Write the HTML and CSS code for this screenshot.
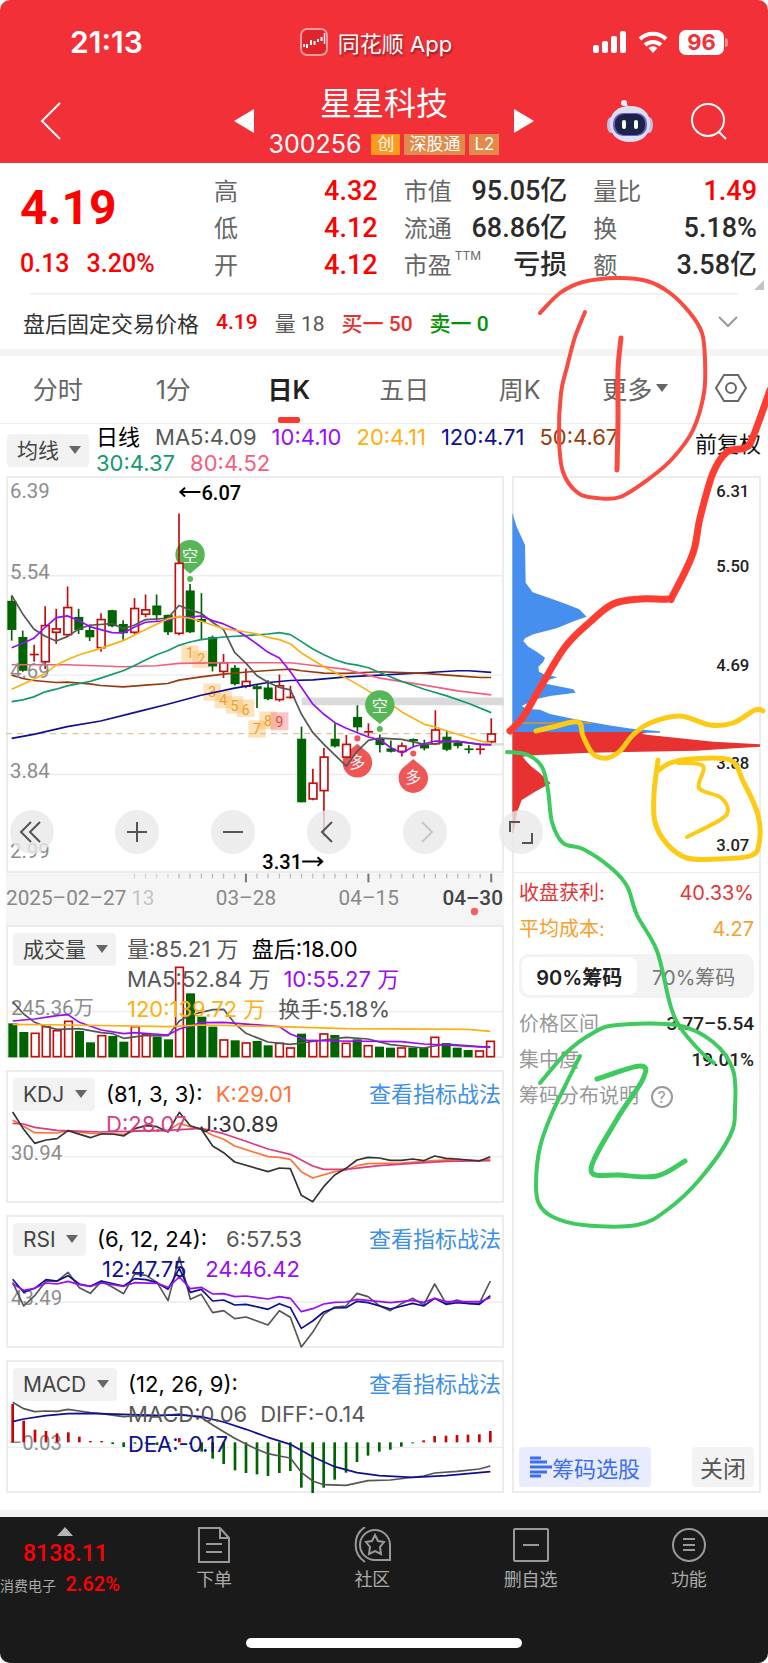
FILE: index.html
```html
<!DOCTYPE html>
<html lang="zh-CN">
<head>
    <meta charset="UTF-8">
    <meta name="viewport" content="width=device-width, initial-scale=1.0">
    <title>星星科技 300256</title>
    <link rel="stylesheet" href="styles.css">
</head>
<body>
<div class="page">

    <header class="header">
        <div class="status-bar">
            <span class="clock">21:13</span>
            <span class="app-name">
                <svg width="28" height="28" viewBox="0 0 28 28">
                    <rect x="1" y="1" width="26" height="26" rx="6" fill="#e0242b" stroke="#f79a9c" stroke-width="2"/>
                    <path d="M4 16v3M7 16v4M11 12v5M14.500 13v4M18 11v3M21.500 9v4" stroke="#fff" stroke-width="2"/>
                    <path d="M24.500 5v11" stroke="#fff" stroke-width="1.500"/>
                </svg>
                同花顺 App
            </span>
            <span class="status-icons">
                <svg width="34" height="22" viewBox="0 0 34 22" fill="#fff">
                    <rect x="0" y="14" width="6" height="8" rx="2"/>
                    <rect x="9" y="10" width="6" height="12" rx="2"/>
                    <rect x="18" y="5" width="6" height="17" rx="2"/>
                    <rect x="27" y="0" width="6" height="22" rx="2"/>
                </svg>
                <svg width="30" height="22" viewBox="0 0 30 22" fill="none" stroke="#fff" stroke-width="4">
                    <path d="M2 8a19 19 0 0 1 26 0"/>
                    <path d="M7 14a12 12 0 0 1 16 0"/>
                    <path d="M15 22l-4.500-5a7 7 0 0 1 9 0z" fill="#fff" stroke="none"/>
                </svg>
                <span class="battery">96</span>
            </span>
        </div>

        <nav class="nav-bar">
            <a href="#" class="back" aria-label="返回">
                <svg width="22" height="38" viewBox="0 0 22 38" fill="none" stroke="#fff" stroke-width="2"><path d="M20 1L2 19l18 18"/></svg>
            </a>
            <div class="stock">
                <a href="#" aria-label="上一只"><svg width="20" height="24" viewBox="0 0 20 24" fill="#fff"><path d="M20 0v24L0 12z"/></svg></a>
                <div class="stock-name">
                    <h1>星星科技</h1>
                    <div class="stock-code">
                        <span class="code">300256</span>
                        <span class="tag tag-new">创</span>
                        <span class="tag">深股通</span>
                        <span class="tag">L2</span>
                    </div>
                </div>
                <a href="#" aria-label="下一只"><svg width="20" height="24" viewBox="0 0 20 24" fill="#fff"><path d="M0 0v24L20 12z"/></svg></a>
            </div>
            <div class="nav-actions">
                <a href="#" aria-label="助手">
                    <svg width="46" height="42" viewBox="0 0 46 42">
                        <path d="M20 8c0-3-1-4-3-5" fill="none" stroke="#e7e2f7" stroke-width="2"/>
                        <circle cx="17" cy="3" r="3" fill="#efeafc"/>
                        <ellipse cx="4" cy="25" rx="4" ry="8" fill="#c3c0e0"/>
                        <ellipse cx="42" cy="25" rx="4" ry="8" fill="#c3c0e0"/>
                        <path d="M23 6c13 0 20 7 20 18S35 42 23 42 3 35 3 24 10 6 23 6z" fill="#dfdff2"/>
                        <rect x="6" y="13" width="34" height="23" rx="10" fill="#6a5fd0"/>
                        <rect x="8" y="14" width="30" height="21" rx="9" fill="#1b2447"/>
                        <rect x="15" y="20" width="4" height="9" rx="2" fill="#fff"/>
                        <rect x="27" y="20" width="4" height="9" rx="2" fill="#fff"/>
                    </svg>
                </a>
                <a href="#" aria-label="搜索">
                    <svg width="37" height="38" viewBox="0 0 37 38" fill="none" stroke="#fff" stroke-width="2"><circle cx="17" cy="18" r="16"/><path d="M28 30l7 7"/></svg>
                </a>
            </div>
        </nav>
    </header>

    <section class="quote">
        <div class="price">
            <div class="price-now">4.19</div>
            <div class="price-change"><span>0.13</span><span>3.20%</span></div>
        </div>
        <div class="quote-col">
            <div class="quote-row"><span>高</span><b class="red">4.32</b></div>
            <div class="quote-row"><span>低</span><b class="red">4.12</b></div>
            <div class="quote-row"><span>开</span><b class="red">4.12</b></div>
        </div>
        <div class="quote-col">
            <div class="quote-row"><span>市值</span><b>95.05亿</b></div>
            <div class="quote-row"><span>流通</span><b>68.86亿</b></div>
            <div class="quote-row"><span>市盈<sup>TTM</sup></span><b>亏损</b></div>
        </div>
        <div class="quote-col">
            <div class="quote-row"><span>量比</span><b class="red">1.49</b></div>
            <div class="quote-row"><span>换</span><b>5.18%</b></div>
            <div class="quote-row"><span>额</span><b>3.58亿</b></div>
        </div>
        <span class="corner"></span>
    </section>

    <div class="divider"></div>

    <section class="after-hours">
        <span>盘后固定交易价格</span>
        <span class="num red">4.19</span>
        <span class="num gray">量 18</span>
        <span class="num buy">买一 50</span>
        <span class="num sell">卖一 0</span>
        <svg class="expand" width="20" height="12" viewBox="0 0 20 12" fill="none" stroke="#999" stroke-width="2"><path d="M1 1l9 9 9-9"/></svg>
    </section>

    <nav class="tabs">
        <a href="#">分时</a>
        <a href="#">1分</a>
        <a href="#" class="active">日K</a>
        <a href="#">五日</a>
        <a href="#">周K</a>
        <a href="#" class="more">更多</a>
        <a href="#" aria-label="设置">
            <svg width="32" height="28" viewBox="0 0 32 28" fill="none" stroke="#666" stroke-width="2"><path d="M9 1h14l8 13-8 13H9L1 14z"/><circle cx="16" cy="14" r="5"/></svg>
        </a>
    </nav>

    <div class="ma-bar">
        <label class="picker"><select aria-label="均线"><option>均线</option></select></label>
        <div class="ma-values">
            <div><span class="black">日线</span><span class="gray">MA5:4.09</span><span class="purple">10:4.10</span><span class="yellow">20:4.11</span><span class="navy">120:4.71</span><span class="brown">50:4.67</span></div>
            <div><span class="green">30:4.37</span><span class="pink">80:4.52</span></div>
        </div>
        <a href="#" class="adjust">前复权</a>
    </div>

    <main class="board">
        <div class="charts">
            <div class="kline">
                <svg id="kline" viewBox="21 18 1488 1185">
                    <g class="grid"><path d="M21 316H1509M21 613H1509M21 910H1509"/></g>
                    <rect x="905" y="680" width="604" height="23" fill="#dadada"/>
                    <path d="M1430 820H1509" stroke="#ddd" stroke-width="8"/>
                    <path d="M21 788H1509" stroke="#dcc49c" stroke-width="4" stroke-dasharray="18 15"/>
                    <g class="marks">
                        <rect x="545" y="524" width="52" height="52"/><rect x="578" y="540" width="52" height="52"/>
                        <rect x="611" y="638" width="52" height="52"/><rect x="644" y="660" width="52" height="52"/>
                        <rect x="678" y="676" width="52" height="52"/><rect x="711" y="686" width="52" height="52"/>
                        <rect x="745" y="748" width="52" height="52"/><rect x="778" y="722" width="52" height="52"/>
                        <rect x="811" y="724" width="54" height="54" class="last"/>
                        <text x="571" y="563">1</text><text x="604" y="580">2</text><text x="637" y="679">3</text>
                        <text x="670" y="703">4</text><text x="704" y="719">5</text><text x="737" y="731">6</text>
                        <text x="771" y="788">7</text><text x="804" y="764">8</text><text x="838" y="767" class="last">9</text>
                    </g>
                    <g class="pin short">
                        <path d="M571 310l-24-20a44 44 0 1 1 48 0z"/><circle cx="571" cy="326" r="9"/><text x="571" y="275">空</text>
                    </g>
                    <g class="pin long">
                        <path d="M1071 818l-24 20a44 44 0 1 0 48 0z"/><circle cx="1071" cy="802" r="9"/><text x="1071" y="890">多</text>
                        <path d="M1238 864l-24 20a44 44 0 1 0 48 0z"/><circle cx="1238" cy="847" r="9"/><text x="1238" y="936">多</text>
                    </g>
                    <g class="plot"></g>
                    <g class="pin short">
                        <path d="M1138 759l-24-20a44 44 0 1 1 48 0z"/><circle cx="1138" cy="774" r="9"/><text x="1138" y="724">空</text>
                    </g>
                    <g class="scale">
                        <text x="33" y="84">6.39</text><text x="33" y="325">5.54</text><text x="33" y="621">4.69</text>
                        <text x="33" y="919">3.84</text><text x="33" y="1160">2.99</text>
                    </g>
                    <g class="extreme">
                        <text x="605" y="89">6.07</text><text x="787" y="1192">3.31</text>
                        <path d="M602 66h-60m14-13l-14 13 14 13M906 1170h60m-14-13l14 13-14 13"/>
                    </g>
                </svg>
                <div class="tools">
                    <button type="button" aria-label="最左"><svg viewBox="0 0 44 44"><path d="M30 12L20 22l10 10M21 12L11 22l10 10"/></svg></button>
                    <button type="button" aria-label="放大"><svg viewBox="0 0 44 44"><path d="M22 12v20M12 22h20"/></svg></button>
                    <button type="button" aria-label="缩小"><svg viewBox="0 0 44 44"><path d="M12 22h20"/></svg></button>
                    <button type="button" aria-label="左移"><svg viewBox="0 0 44 44"><path d="M25 12L15 22l10 10"/></svg></button>
                    <button type="button" aria-label="右移" disabled><svg viewBox="0 0 44 44"><path d="M19 12l10 10-10 10"/></svg></button>
                    <button type="button" aria-label="全屏"><svg viewBox="0 0 44 44"><path d="M11 22V12h10M23 33h10V23"/></svg></button>
                </div>
            </div>

            <svg id="axis" class="axis" viewBox="21 36 1488 156">
                <g class="plot"></g>
                <text x="21" y="132">2025–02–27</text>
                <text x="395" y="132" opacity="0.45">13</text>
                <text x="648" y="132">03–28</text>
                <text x="1015" y="132">04–15</text>
                <text x="1506" y="132" class="today">04–30</text>
                <circle cx="1421" cy="151" r="11" fill="#f55f5f"/>
            </svg>

            <div class="panels">
                <section class="panel">
                    <svg id="volume" viewBox="21 195 1488 399">
                        <g class="grid"><path d="M21 455H1509"/></g>
                        <text class="scale-text" x="33" y="465">245.36万</text>
                        <g class="plot"></g>
                    </svg>
                    <div class="panel-head">
                        <label class="picker"><select aria-label="指标一"><option>成交量</option></select></label>
                        <div class="values">
                            <div><span class="gray">量:85.21 万</span><span class="black">盘后:18.00</span></div>
                            <div><span class="gray">MA5:52.84 万</span><span class="purple">10:55.27 万</span></div>
                            <div><span class="yellow">120:139.72 万</span><span class="gray">换手:5.18%</span></div>
                        </div>
                    </div>
                </section>

                <section class="panel">
                    <svg id="kdj" viewBox="21 30 1488 399">
                        <g class="grid"><path d="M21 290H1509"/></g>
                        <text class="scale-text" x="33" y="299">30.94</text>
                        <g class="plot"></g>
                    </svg>
                    <div class="panel-head">
                        <label class="picker"><select aria-label="指标二"><option>KDJ</option></select></label>
                        <div class="values">
                            <div><span class="black">(81, 3, 3):</span><span class="orange">K:29.01</span></div>
                            <div><span class="magenta">D:28.07</span><span class="dark">J:30.89</span></div>
                        </div>
                        <a href="#">查看指标战法</a>
                    </div>
                </section>

                <section class="panel">
                    <svg id="rsi" viewBox="21 30 1488 399">
                        <g class="grid"><path d="M21 291H1509"/></g>
                        <text class="scale-text" x="33" y="299">43.49</text>
                        <g class="plot"></g>
                    </svg>
                    <div class="panel-head">
                        <label class="picker"><select aria-label="指标三"><option>RSI</option></select></label>
                        <div class="values">
                            <div class="wide"><span class="black">(6, 12, 24):</span><span class="gray">6:57.53</span></div>
                            <div class="wide indent"><span class="navy">12:47.75</span><span class="purple">24:46.42</span></div>
                        </div>
                        <a href="#">查看指标战法</a>
                    </div>
                </section>

                <section class="panel">
                    <svg id="macd" viewBox="21 30 1488 399">
                        <g class="grid"><path d="M21 292H1509"/></g>
                        <text class="scale-text" x="27" y="299">–0.03</text>
                        <g class="plot"></g>
                    </svg>
                    <div class="panel-head">
                        <label class="picker"><select aria-label="指标四"><option>MACD</option></select></label>
                        <div class="values">
                            <div><span class="black">(12, 26, 9):</span></div>
                            <div><span class="gray">MACD:0.06</span><span class="gray">DIFF:-0.14</span></div>
                            <div><span class="navy">DEA:-0.17</span></div>
                        </div>
                        <a href="#">查看指标战法</a>
                    </div>
                </section>
            </div>
        </div>

        <aside class="chips">
            <svg viewBox="36 618 747 1188">
                <path fill="#468fee" d="M37 728L50 770 75 825 77 938 98 967 150 985 200 1003 238 1018 260 1040 225 1052 170 1075 100 1093 75 1105 70 1113 85 1130 110 1145 135 1163 130 1175 115 1190 117 1205 130 1212 172 1222 145 1230 130 1240 220 1258 227 1268 150 1278 110 1287 65 1308 80 1316 120 1319 150 1332 240 1351 335 1367 395 1376 480 1384V1388H37z"/>
                <path fill="#e73231" d="M37 1386H440L425 1391 440 1394 540 1405 640 1415 780 1423V1430L680 1436 590 1442 380 1446 270 1448 100 1456 68 1460 80 1475 95 1490 120 1510 152 1540 110 1562 65 1590 52 1625 40 1690H37z"/>
                <path d="M37 1359H275" stroke="#d9982f" stroke-width="4"/>
                <g class="chip-scale">
                    <text x="748" y="680">6.31</text><text x="748" y="905">5.50</text><text x="748" y="1202">4.69</text>
                    <text x="748" y="1498">3.88</text><text x="748" y="1744">3.07</text>
                </g>
            </svg>
            <div class="chip-info">
                <div class="chip-row profit"><span>收盘获利:</span><span>40.33%</span></div>
                <div class="chip-row cost"><span>平均成本:</span><span>4.27</span></div>
                <div class="segment">
                    <button type="button" class="on">90%筹码</button>
                    <button type="button">70%筹码</button>
                </div>
                <div class="chip-row"><span>价格区间</span><b>3.77–5.54</b></div>
                <div class="chip-row"><span>集中度</span><b>19.01%</b></div>
                <div class="chip-row"><a href="#">筹码分布说明 <i>?</i></a></div>
            </div>
            <div class="chip-actions">
                <button type="button" class="pick">
                    <svg width="22" height="22" viewBox="0 0 22 22" stroke="#3d6cf5" stroke-width="3"><path d="M0 2h11M0 6h17M0 11h22M0 16h17M0 20h11"/></svg>筹码选股
                </button>
                <button type="button">关闭</button>
            </div>
        </aside>
    </main>

    <footer class="footer">
        <nav class="footer-nav">
            <a href="#" class="index">
                <span class="up"></span>
                <span class="index-value">8138.11</span>
                <span class="index-name">消费电子 <b>2.62%</b></span>
            </a>
            <a href="#">
                <svg width="36" height="36" viewBox="0 0 36 36"><path d="M3 1h21l9 10v24H3zM24 1v10h9M10 17h16M10 25h16"/></svg>
                下单
            </a>
            <a href="#">
                <svg width="38" height="36" viewBox="0 0 38 36"><path d="M12 0a21 21 0 0 0 0 35M37 18v15H22a15 15 0 1 1 15-15zM22 8l3 6 6 1-4 5 1 7-6-3-6 3 1-7-4-5 6-1z"/></svg>
                社区
            </a>
            <a href="#">
                <svg width="36" height="36" viewBox="0 0 36 36"><rect x="1" y="2" width="34" height="32" rx="1"/><path d="M10 18h16"/></svg>
                删自选
            </a>
            <a href="#">
                <svg width="36" height="36" viewBox="0 0 36 36"><circle cx="18" cy="18" r="16"/><path d="M12 12h12M12 18h12M12 23h12"/></svg>
                功能
            </a>
        </nav>
        <div class="home-indicator"></div>
    </footer>

    <svg id="notes" class="notes" viewBox="0 0 768 1663"></svg>
</div>
<script src="script.js"></script>
</body>
</html>
```
FILE: styles.css
```css
* {
    box-sizing: border-box;
}

body {
    margin: 0;
    background: #fff;
    color: #333;
    font-family: Inter, "Noto Sans CJK SC", sans-serif;
    font-size: 21px;
}

a {
    color: inherit;
    text-decoration: none;
}

button,
select {
    font: inherit;
    color: inherit;
    border: none;
    padding: 0;
    background: none;
}

svg {
    display: block;
}

.page {
    position: relative;
}

/* colours */
.red { color: #fe0000; }
.buy { color: #e8302f; }
.sell { color: #009400; }
.gray { color: #585858; }
.dark { color: #333; }
.black { color: #000; }
.purple { color: #9a0cf5; }
.yellow { color: #fcb011; }
.navy { color: #0e0e96; }
.brown { color: #993a0d; }
.green { color: #129a6c; }
.pink { color: #f35f7c; }
.orange { color: #ff7337; }
.magenta { color: #da3b83; }

/* header */
.header {
    background: #f23037;
    color: #fff;
    border-radius: 10px 10px 0 0;
    height: 163px;
}

.status-bar {
    display: grid;
    grid-template-columns: 1fr auto 1fr;
    align-items: center;
    height: 84px;
    padding: 0 40px 0 24px;
}

.clock {
    padding-left: 46px;
    font-size: 30px;
    font-weight: 600;
}

.app-name {
    display: flex;
    align-items: center;
    gap: 10px;
    font-size: 22px;
    text-shadow: 1px 2px 2px rgba(0, 0, 0, 0.4);
}

.status-icons {
    display: flex;
    justify-content: flex-end;
    align-items: center;
    gap: 11px;
}

.battery {
    position: relative;
    width: 45px;
    margin-right: 4px;
    border-radius: 7px;
    background: #fff;
    color: #f23037;
    font-size: 22px;
    font-weight: 700;
    line-height: 25px;
    text-align: center;
}

.battery::after {
    content: "";
    position: absolute;
    right: -4px;
    top: 8px;
    width: 3px;
    height: 9px;
    border-radius: 0 3px 3px 0;
    background: #f58f92;
}

.nav-bar {
    display: grid;
    grid-template-columns: 1fr auto 1fr;
    align-items: center;
    align-content: center;
    height: 74px;
    padding: 0 40px;
}

.stock {
    display: flex;
    align-items: center;
    gap: 15px;
}

.stock-name {
    text-align: center;
}

.stock-name h1 {
    margin: 0;
    font-size: 32px;
    font-weight: 400;
    line-height: 42px;
}

.stock-code {
    display: flex;
    align-items: center;
    gap: 4px;
    line-height: 30px;
    padding-top: 4px;
}

.code {
    font-size: 25px;
    margin-right: 6px;
}

.tag {
    padding: 0 5px;
    background: #e18a4a;
    font-size: 17px;
    line-height: 21px;
}

.tag-new {
    background: #fd9a1c;
    padding: 0 6px;
}

.nav-actions {
    display: flex;
    justify-content: flex-end;
    align-items: center;
    gap: 38px;
}

/* quote */
.quote {
    position: relative;
    display: grid;
    grid-template-columns: 168px 1fr 1fr 1fr;
    gap: 26px;
    padding: 10px 11px 9px 20px;
}

.price {
    color: #fe0000;
    font-family: Roboto, sans-serif;
    font-weight: 500;
}

.price-now {
    font-size: 48px;
    font-weight: 700;
    line-height: 70px;
}

.price-change {
    display: flex;
    gap: 17px;
    font-size: 25px;
    line-height: 41px;
}

.quote-row {
    display: flex;
    justify-content: space-between;
    font-size: 24px;
    line-height: 37px;
    height: 37px;
    color: #666;
}

.quote-row b {
    font-family: Roboto, "Noto Sans CJK SC", sans-serif;
    font-size: 27px;
    font-weight: 500;
    color: #2b2b2b;
}

.quote-row b.red {
    color: #fe0000;
}

.quote-row sup {
    margin-left: 3px;
    font-size: 12px;
    line-height: 12px;
    vertical-align: 14px;
}

.corner {
    position: absolute;
    right: 4px;
    bottom: 3px;
    border: 5px solid transparent;
    border-right-color: #c4c4c4;
    border-bottom-color: #c4c4c4;
}

.divider {
    height: 2px;
    margin: 0 30px;
    background: #f2f2f2;
}

.after-hours {
    display: flex;
    align-items: center;
    gap: 17px;
    height: 54px;
    padding: 0 30px 0 23px;
    font-size: 22px;
}

.num {
    font-family: Roboto, "Noto Sans CJK SC", sans-serif;
    font-size: 21px;
    font-weight: 500;
}

.num.gray {
    font-weight: 400;
}

.expand {
    margin-left: auto;
}

/* tabs */
.tabs {
    display: grid;
    grid-template-columns: repeat(6, 1fr) 75px;
    height: 75px;
    border-top: 7px solid #f4f4f4;
    border-bottom: 1px solid #eee;
    color: #666;
    font-size: 25px;
}

.tabs a {
    position: relative;
    display: flex;
    justify-content: center;
    align-items: center;
    padding-bottom: 3px;
}

.tabs .active {
    color: #222;
    font-weight: 600;
}

.tabs .active::after {
    content: "";
    position: absolute;
    bottom: 0;
    width: 22px;
    height: 6px;
    border-radius: 2px;
    background: #fb382f;
}

.more::after,
.picker::after {
    content: "";
    margin-left: 4px;
    border: 6px solid transparent;
    border-top: 8px solid #666;
    border-bottom: 0;
}

/* pickers and indicator values */
.picker {
    display: flex;
    align-items: center;
    height: 33px;
    padding: 0 8px 0 10px;
    border-radius: 4px;
    background: #f2f2f2;
}

.picker::after {
    margin-left: 10px;
    pointer-events: none;
}

.picker select {
    appearance: none;
    color: #444;
}

.ma-bar {
    display: flex;
    align-items: center;
    gap: 7px;
    height: 52px;
    padding: 0 7px;
    white-space: nowrap;
}

.ma-values {
    flex: 1;
    font-size: 22px;
    line-height: 26px;
}

.ma-values div {
    display: flex;
    gap: 15px;
}

.adjust {
    padding-bottom: 16px;
    font-size: 22px;
    color: #111;
}

/* charts */
.board {
    display: grid;
    grid-template-columns: 2fr 1fr;
    gap: 8px;
    padding: 0 7px 17px 6px;
    border-bottom: 7px solid #f2f2f2;
}

.charts {
    min-width: 0;
}

.kline,
.panel,
.chips {
    position: relative;
    box-shadow: inset 0 0 0 2px #ececec;
}

svg text {
    font-family: Roboto, "Noto Sans CJK SC", sans-serif;
}

.grid {
    stroke: #ececec;
    stroke-width: 4;
}

.scale text,
.scale-text {
    fill: #8c8c8c;
    font-size: 61px;
}

.extreme {
    fill: #000;
    font-size: 60px;
    font-weight: 500;
}

.extreme path {
    fill: none;
    stroke: #000;
    stroke-width: 6;
}

.kline > svg {
    overflow: visible;
}

.marks rect {
    fill: #fbb95f;
    fill-opacity: 0.42;
}

.marks rect.last {
    fill: #f87878;
}

.marks text {
    fill: #f39a1e;
    font-size: 42px;
    text-anchor: middle;
}

.marks text.last {
    fill: #e84040;
}

.pin text {
    fill: #fff;
    font-size: 48px;
    text-anchor: middle;
}

.short { fill: #57b757; }
.long { fill: #ef5757; }

.tools {
    position: absolute;
    left: 4px;
    bottom: 19px;
    z-index: 1;
    display: flex;
    gap: 52px;
}

.tools button {
    width: 44px;
    height: 44px;
    border-radius: 50%;
    background: rgba(232, 232, 232, 0.8);
}

.tools button:first-child {
    margin-right: 9px;
}

.tools svg {
    fill: none;
    stroke: #555;
    stroke-width: 2;
}

.tools button:disabled svg {
    stroke: #c8c8c8;
}

.axis {
    background: #f5f5f5;
    fill: #888;
    font-size: 62px;
}

.axis .today {
    fill: #444;
    font-weight: 500;
    text-anchor: end;
}

.panels {
    display: grid;
    grid-template-columns: minmax(0, 1fr);
    gap: 12px;
}

.panel {
    height: 133px;
}

.panel > svg {
    position: absolute;
    inset: 0;
    width: 100%;
    height: 100%;
}

.panel-head {
    position: relative;
    display: flex;
    align-items: flex-start;
    gap: 11px;
    padding: 8px 3px 0 7px;
    font-size: 22px;
    white-space: nowrap;
}

.panel-head .picker {
    flex: none;
    font-size: 21px;
}

.values {
    flex: 1;
    min-width: 0;
    padding-top: 1px;
    line-height: 30px;
}

.values div {
    display: flex;
    gap: 13px;
}

.values .wide {
    gap: 19px;
}

.values .indent {
    padding-left: 5px;
}

.panel-head > a {
    flex: none;
    color: #3d8fe8;
    line-height: 32px;
}

/* chip distribution */
.chips {
    display: flex;
    flex-direction: column;
    min-width: 0;
    padding-bottom: 6px;
}

.chip-scale text {
    fill: #222;
    font-size: 50px;
    font-weight: 500;
    text-anchor: end;
}

.chip-info {
    padding: 2px 7px 0 7px;
    border-top: 1px solid #ececec;
    font-size: 20px;
}

.chip-row {
    display: flex;
    justify-content: space-between;
    line-height: 36px;
    color: #999;
}

.chip-row b {
    color: #222;
    font-family: Roboto, sans-serif;
    font-size: 19px;
    font-weight: 500;
}

.chip-row.profit { color: #e33437; }
.chip-row.cost { color: #f7a02c; }

.chip-row i {
    display: inline-block;
    width: 22px;
    margin-left: 6px;
    border: 2px solid #999;
    border-radius: 50%;
    font-size: 16px;
    font-style: normal;
    line-height: 18px;
    text-align: center;
}

.segment {
    display: grid;
    grid-template-columns: 1fr 1fr;
    height: 44px;
    margin: 7px 0 8px;
    padding: 3px;
    border-radius: 10px;
    background: #f3f3f3;
    color: #777;
}

.segment .on {
    border-radius: 8px;
    background: #fff;
    color: #222;
    font-weight: 600;
}

.chip-actions {
    display: flex;
    justify-content: space-between;
    margin-top: auto;
    padding: 0 7px;
}

.chip-actions button {
    display: flex;
    align-items: center;
    height: 40px;
    padding: 0 8px;
    border-radius: 4px;
    background: #f3f3f3;
    font-size: 23px;
    color: #555;
}

.chip-actions .pick {
    padding: 0 11px;
    background: #e8ecfe;
    color: #3d6cf5;
    font-size: 22px;
}

/* footer */
.footer {
    height: 146px;
    background: #1a1a1a;
    color: #aaa;
    border-radius: 0 0 10px 10px;
}

.footer-nav {
    display: grid;
    grid-template-columns: 135px repeat(4, 1fr);
    height: 121px;
}

.footer-nav a {
    display: flex;
    flex-direction: column;
    align-items: center;
    gap: 5px;
    padding-top: 10px;
    font-size: 18px;
    line-height: 24px;
}

.footer-nav svg {
    fill: none;
    stroke: #999;
    stroke-width: 2;
}

.footer-nav .index {
    gap: 0;
    color: #fe0000;
    font-family: Roboto, "Noto Sans CJK SC", sans-serif;
    font-weight: 500;
    align-items: flex-start;
}

.up {
    margin-left: 57px;
    border: 8px solid transparent;
    border-top: 0;
    border-bottom: 9px solid #b5b5b5;
}

.index-value {
    margin-left: 23px;
    font-size: 23px;
    line-height: 36px;
}

.index-name {
    color: #aaa;
    font-size: 14px;
    font-weight: 400;
    white-space: nowrap;
}

.index-name b {
    margin-left: 6px;
    color: #fe0000;
    font-size: 20px;
    font-weight: 500;
}

.home-indicator {
    width: 36%;
    height: 10px;
    margin: 0 auto;
    border-radius: 5px;
    background: #fff;
}

/* hand-drawn notes over the page */
.notes {
    position: absolute;
    top: 0;
    left: 0;
    z-index: 2;
    width: 100%;
    fill: none;
    stroke-linecap: round;
    stroke-linejoin: round;
    pointer-events: none;
}
```
FILE: script.js
```js
const NS = 'http://www.w3.org/2000/svg';
const RED = '#c40d0d';
const GREEN = '#006400';
const STEP = 1433 / 43;

function add(parent, tag, attrs) {
    const el = document.createElementNS(NS, tag);
    for (const key in attrs) el.setAttribute(key, attrs[key]);
    parent.appendChild(el);
    return el;
}

function plot(id) {
    return document.querySelector('#' + id + ' .plot');
}

function xAt(i) {
    return Math.round(38 + i * STEP);
}

function line(id, color, points) {
    add(plot(id), 'polyline', { points, fill: 'none', stroke: color, 'stroke-width': 5, 'stroke-linejoin': 'round' });
}

function body(g, i, up, top, bottom) {
    const h = Math.max(bottom - top, 5);
    if (up && h > 8) {
        add(g, 'rect', { x: xAt(i) - 11, y: top + 2, width: 23, height: h - 4, fill: '#fff', stroke: RED, 'stroke-width': 5 });
    } else {
        add(g, 'rect', { x: xAt(i) - 13, y: top, width: 27, height: h, fill: up ? RED : GREEN });
    }
}

// 涨跌, 最高, 实体上沿, 实体下沿, 最低
const candles = [
    [0,375,391,478,510],[0,480,499,600,603],[1,522,549,554,573],[1,407,463,575,595],[1,415,473,487,520],
    [1,348,409,494,497],[0,415,439,478,490],[0,462,478,500,511],[1,428,445,533,543],[0,418,419,467,470],
    [0,449,460,488,507],[1,383,412,487,490],[1,372,416,433,440],[0,372,405,434,450],[0,432,433,485,493],
    [1,130,277,490,494],[0,341,360,485,487],[0,368,445,454,508],[0,495,499,587,602],[1,550,574,604,622],
    [0,583,591,640,644],[1,593,630,648,652],[0,640,646,655,711],[0,628,650,685,688],[1,611,643,688,692],
    [1,645,677,682,683],[0,767,803,993,993],[1,893,934,985,987],[1,831,856,960,1095],[0,757,803,826,829],
    [1,792,818,860,862],[0,703,738,769,782],[1,757,780,785,796],[0,790,803,822,844],[0,808,832,842,844],
    [1,814,823,843,856],[0,802,804,811,826],[0,806,822,832,838],[1,718,775,820,822],[0,778,797,836,840],
    [0,809,814,825,832],[0,822,832,836,847],[1,822,832,837,850],[1,742,787,814,817]
];

candles.forEach(([up, high, top, bottom, low], i) => {
    const g = plot('kline');
    add(g, 'path', { d: `M${xAt(i)} ${high}V${low}`, stroke: up ? RED : GREEN, 'stroke-width': 5 });
    body(g, i, up, top, bottom);
});

line('kline', '#0e0e96', '38,802 104,790 204,767 304,750 404,725 504,700 604,673 704,652 804,635 871,629 938,627 1038,618 1138,613 1271,606 1371,600 1404,600 1471,605');
line('kline', '#993a0d', '38,613 71,623 104,629 171,635 204,634 271,639 304,644 371,648 438,643 504,638 538,628 604,618 671,610 750,603 838,597 871,595 904,600 971,607 1038,608 1138,603 1271,608 1371,615 1438,620 1471,620');
line('kline', '#f35f7c', '38,582 204,582 371,588 471,585 538,578 671,576 871,576 971,588 1038,596 1138,622 1271,643 1371,660 1471,672');
line('kline', '#129a6c', '38,692 71,687 104,678 138,663 171,655 204,645 271,632 304,622 371,600 404,585 438,568 471,552 504,540 538,524 571,514 604,507 671,499 738,495 804,490 838,486 871,492 904,513 938,535 971,552 1004,567 1038,578 1071,583 1104,591 1138,605 1204,632 1271,655 1338,675 1404,698 1471,725');
line('kline', '#555', '38,375 71,430 104,475 138,497 171,511 204,498 238,475 271,464 338,459 371,474 404,464 438,447 504,443 538,405 571,418 604,428 638,455 671,477 704,545 738,577 771,615 804,634 838,650 871,657 904,730 938,785 971,820 1038,885 1071,840 1104,808 1138,801 1204,805 1271,820 1304,818 1338,812 1371,811 1438,820 1471,821');
line('kline', '#9a0cf5', '38,531 71,518 104,503 138,470 171,441 204,436 238,450 271,468 304,477 338,486 371,487 404,470 438,455 504,450 538,438 571,440 604,436 638,450 671,460 704,475 738,497 771,520 804,545 838,562 871,603 904,650 938,700 971,730 1004,755 1038,772 1071,785 1104,798 1138,806 1171,830 1204,846 1238,827 1271,818 1304,810 1371,811 1438,820 1471,821');
line('kline', '#fcb011', '38,655 71,640 104,625 138,608 171,583 204,567 238,553 304,533 371,510 438,477 504,445 538,438 571,443 604,452 638,463 671,474 738,484 771,490 804,500 838,507 871,520 904,547 971,588 1038,622 1104,660 1171,700 1204,723 1271,760 1304,768 1338,780 1438,810 1471,815');

// 时间轴刻度
for (let i = 11; i < 44; i++) {
    const major = i === 21 || i === 32 || i === 43;
    add(plot('axis'), 'path', {
        d: `M${xAt(i)} 38v${major ? 26 : 14}`,
        stroke: major ? '#777' : '#bbb',
        'stroke-width': major ? 6 : 4,
        opacity: i < 15 ? 0.5 : 1
    });
}

// 成交量
const volumes = [490,516,518,498,510,482,513,547,525,528,545,498,522,530,538,320,400,470,500,538,541,547,
    543,556,548,562,521,540,520,525,548,538,555,560,563,562,563,563,530,549,563,570,571,542];
volumes.forEach((top, i) => body(plot('volume'), i, candles[i][0], top, 592));
line('volume', '#555', '38,425 71,462 104,487 138,500 171,508 238,506 304,518 338,521 371,535 438,526 504,527 538,483 571,465 638,449 671,448 704,490 738,520 804,546 871,553 971,540 1038,532 1104,537 1171,554 1271,564 1338,552 1471,562');
line('volume', '#9a0cf5', '38,483 104,477 171,467 204,464 238,487 304,510 371,521 404,518 504,525 538,507 604,488 671,487 838,500 871,522 921,541 1004,543 1204,545 1271,552 1338,555 1438,561 1471,560');
line('volume', '#fcb011', '38,493 204,495 504,500 604,495 838,500 1038,506 1404,508 1471,514');

line('kdj', '#ff7337', '38,180 104,218 171,219 204,212 271,220 371,223 404,212 504,212 538,190 571,200 604,208 638,226 671,238 704,258 804,290 838,292 871,298 904,335 938,354 1004,335 1038,330 1071,317 1104,311 1204,309 1304,302 1371,299 1438,302 1471,297');
line('kdj', '#da3b83', '38,190 71,192 104,202 171,211 304,216 504,211 604,205 671,221 738,244 804,267 871,283 938,318 971,328 1038,328 1138,317 1238,310 1338,304 1471,302');
line('kdj', '#333', '38,156 71,208 104,250 138,240 171,236 204,212 271,233 304,222 338,222 371,228 404,206 438,197 471,200 504,216 538,157 571,197 604,208 638,258 671,278 704,306 804,335 838,324 871,326 904,406 938,425 971,380 1004,345 1038,325 1071,300 1104,292 1138,294 1171,301 1204,301 1238,297 1271,302 1304,288 1338,295 1371,297 1438,303 1471,290');

line('rsi', '#555', '38,232 71,303 104,272 138,228 171,229 204,202 238,248 271,265 304,229 338,247 371,266 404,207 438,211 471,232 504,287 538,156 571,283 604,268 638,323 671,317 704,341 738,336 804,360 838,317 871,337 904,426 938,382 971,328 1004,306 1038,303 1071,265 1104,275 1138,302 1171,317 1204,296 1238,280 1271,300 1304,237 1338,295 1371,285 1404,295 1438,295 1471,228');
line('rsi', '#0e0e96', '38,223 71,262 104,250 138,224 171,228 204,212 238,237 271,244 304,228 371,243 404,221 438,224 471,233 504,253 538,190 571,262 604,253 638,288 671,285 704,300 738,298 804,313 838,296 871,308 904,370 938,348 971,321 1004,309 1038,308 1071,289 1104,293 1171,312 1238,295 1271,303 1304,280 1338,298 1371,293 1438,298 1471,272');
line('rsi', '#9a0cf5', '38,236 71,256 104,250 138,234 171,237 204,229 238,239 271,244 304,234 371,244 404,233 471,235 504,247 538,216 571,251 604,247 638,267 671,266 704,275 738,273 804,282 838,275 871,280 904,320 938,311 971,297 1004,292 1038,291 1071,283 1171,293 1238,286 1271,292 1304,280 1338,290 1438,290 1471,278');

// MACD 柱
const macd = [162,212,239,243,250,247,260,273,273,282,291,281,281,285,281,264,283,305,326,342,361,369,
    373,378,369,363,413,429,413,389,368,336,317,305,299,290,280,271,258,257,255,254,253,243];
macd.forEach((y, i) => add(plot('macd'), 'path', {
    d: `M${xAt(i)} 277V${y}`,
    stroke: y < 277 ? '#d00000' : GREEN,
    'stroke-width': 8
}));
line('macd', '#555', '38,157 71,176 104,185 138,183 171,184 204,178 238,183 271,188 304,191 371,200 404,198 471,198 538,192 604,203 638,225 671,245 704,265 738,282 771,298 804,311 838,318 871,324 904,367 938,393 971,404 1038,406 1104,392 1171,390 1271,378 1304,369 1371,364 1438,357 1471,348');
line('macd', '#0e0e96', '38,215 71,207 138,197 204,191 271,190 371,193 471,196 538,195 604,200 671,216 738,238 804,262 871,283 938,320 1004,350 1071,368 1138,377 1238,382 1338,377 1404,371 1471,365');

// 手写批注: 用平滑曲线连接各点
function stroke(color, width, text) {
    const p = text.split(' ').map(s => s.split(',').map(Number));
    let d = 'M' + p[0];
    for (let i = 0; i < p.length - 1; i++) {
        const a = p[i - 1] || p[i], b = p[i], c = p[i + 1], e = p[i + 2] || c;
        d += `C${b[0] + (c[0] - a[0]) / 6},${b[1] + (c[1] - a[1]) / 6} ${c[0] - (e[0] - b[0]) / 6},${c[1] - (e[1] - b[1]) / 6} ${c}`;
    }
    add(document.getElementById('notes'), 'path', { d, stroke: color, 'stroke-width': width });
}

stroke('#fa4b42', 4, '540,313 560,293 583,282 617,278 647,281 670,293 690,313 702,333 705,360 704,393 693,430 673,458 650,478 620,497 597,498 578,493 563,472 559,437 561,393 567,367 575,337 585,312');
stroke('#fa4b42', 5, '621,338 618,370 618,420 617,470');
stroke('#fd3d31', 7, '770,390 753,437 745,448 727,452 713,473 700,518 693,553 673,595 668,599 640,599 613,604 590,622 565,647 540,688 523,717 510,731');

stroke('#fdcb16', 5, '536,731 553,727 578,722 583,736 593,754 607,758 620,751 633,735 650,723 680,716 710,725 733,723 755,710 763,711');
stroke('#fdcb16', 5, '658,760 654,794 655,822 667,844 687,858 717,859 750,856 759,844 758,815 743,781 730,760 690,759 670,763 659,770');
stroke('#fdcb16', 4, '678,763 703,766 699,788 720,797 728,810 720,820 687,837');

stroke('#3fca60', 4, '507,752 528,755 542,767 548,790 552,822 563,843 583,849 610,867 627,886 637,915 657,951 670,1004 680,1027 700,1051 714,1063');
stroke('#3fca60', 4, '540,1083 567,1052 593,1033 617,1025 677,1025 713,1042 733,1070 735,1108 730,1136 700,1179 667,1210 637,1225 583,1225 553,1217 539,1204 536,1183 540,1147 553,1111 580,1056');
stroke('#3fca60', 5, '597,1079 640,1066 643,1079 617,1119 591,1170 620,1175 657,1176 685,1161');
```
